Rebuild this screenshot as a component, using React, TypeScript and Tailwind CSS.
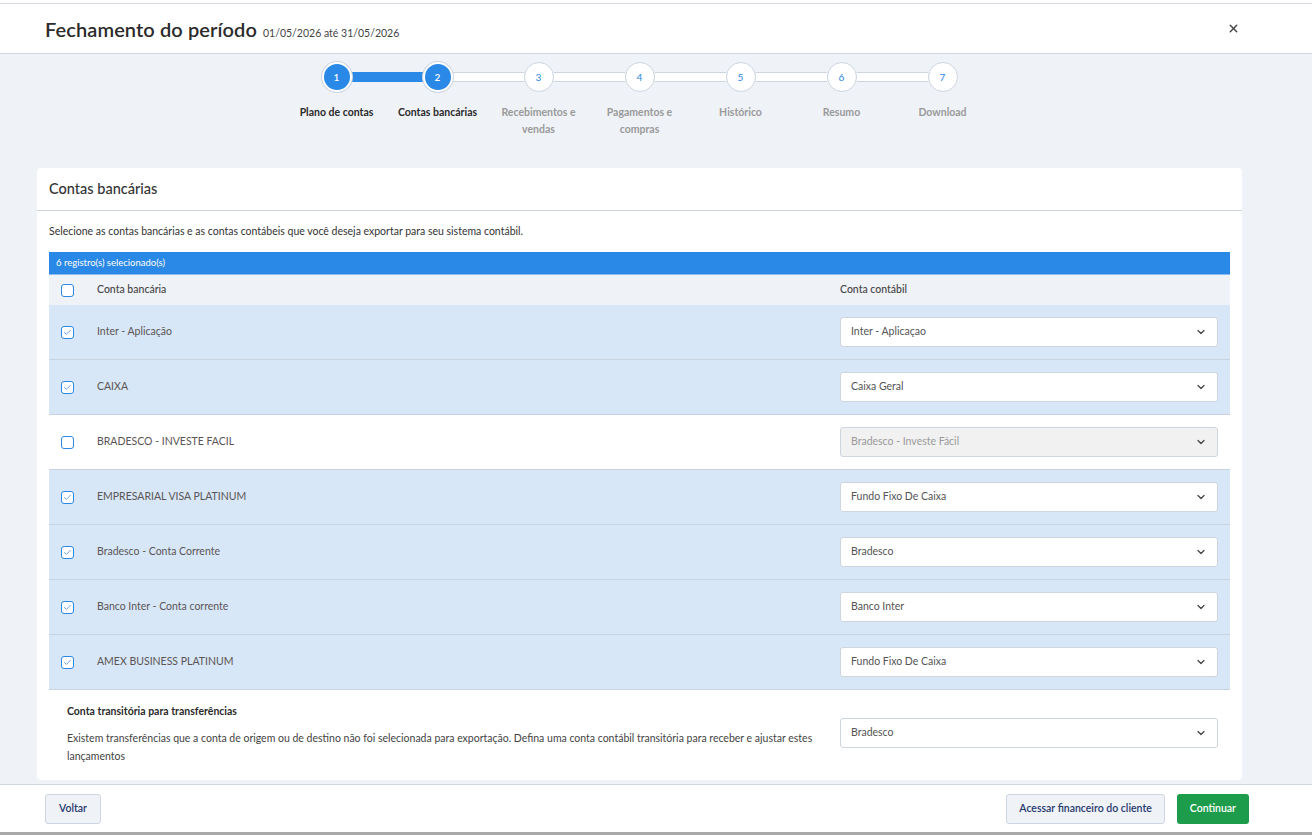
import { ChevronDown, X, Check } from 'lucide-react';

type Row = { name: string; account: string; checked: boolean };

const rows: Row[] = [
  { name: 'Inter - Aplicação', account: 'Inter - Aplicaçao', checked: true },
  { name: 'CAIXA', account: 'Caixa Geral', checked: true },
  { name: 'BRADESCO - INVESTE FACIL', account: 'Bradesco - Investe Fácil', checked: false },
  { name: 'EMPRESARIAL VISA PLATINUM', account: 'Fundo Fixo De Caixa', checked: true },
  { name: 'Bradesco - Conta Corrente', account: 'Bradesco', checked: true },
  { name: 'Banco Inter - Conta corrente', account: 'Banco Inter', checked: true },
  { name: 'AMEX BUSINESS PLATINUM', account: 'Fundo Fixo De Caixa', checked: true },
];

const steps = [
  'Plano de contas',
  'Contas bancárias',
  'Recebimentos e vendas',
  'Pagamentos e compras',
  'Histórico',
  'Resumo',
  'Download',
];

const current = 2;

function Checkbox({ checked }: { checked: boolean }) {
  return (
    <div className="w-[13px] h-[13px] rounded-[3px] border-[1.5px] border-[#2a88e6] bg-white flex items-center justify-center">
      {checked && <Check className="w-[9px] h-[9px] text-[#5d9fe9]" strokeWidth={2.5} />}
    </div>
  );
}

function Select({ value, disabled }: { value: string; disabled?: boolean }) {
  return (
    <div
      className={
        disabled
          ? 'h-[30px] w-full rounded-[3px] border border-[#cfd5dd] bg-[#f1f1f1] flex items-center justify-between pl-[10px] pr-[10px] text-[#9a9a9a]'
          : 'h-[30px] w-full rounded-[3px] border border-[#cfd5dd] bg-white flex items-center justify-between pl-[10px] pr-[10px] text-[#555]'
      }
    >
      <span className="text-[10.5px]">{value}</span>
      <ChevronDown className="w-[12px] h-[12px] text-[#444]" strokeWidth={2.5} />
    </div>
  );
}

function Stepper() {
  return (
    <div className="flex flex-col items-center pt-[8px]">
      <div className="flex items-center">
        {steps.map((_, i) => {
          const n = i + 1;
          const done = n <= current;
          return (
            <div key={n} className="flex items-center">
              {i > 0 && (
                <div
                  className={
                    n <= current
                      ? 'w-[71px] h-[10px] bg-[#2a88e6] border-y border-[#2a88e6]'
                      : 'w-[71px] h-[10px] bg-white border-y border-[#cdd5e0]'
                  }
                />
              )}
              <div
                className={
                  done
                    ? 'relative z-10 w-[30px] h-[30px] rounded-full bg-[#2a88e6] border-[2px] border-white ring-1 ring-[#cdd5e0] flex items-center justify-center text-[10px] text-white font-semibold'
                    : 'relative z-10 w-[30px] h-[30px] rounded-full bg-white border border-[#cdd5e0] flex items-center justify-center text-[10px] text-[#2a88e6]'
                }
              >
                {n}
              </div>
            </div>
          );
        })}
      </div>
      <div className="flex mt-[12px]">
        {steps.map((s, i) => (
          <div
            key={s}
            className={
              i + 1 <= current
                ? 'w-[101px] px-[5px] text-center text-[10.5px] leading-[17px] font-bold text-[#2b2b2b]'
                : 'w-[101px] px-[5px] text-center text-[10.5px] leading-[17px] font-bold text-[#9a9a9a]'
            }
          >
            {s}
          </div>
        ))}
      </div>
    </div>
  );
}

export default function App() {
  return (
    <div
      className="w-[1312px] h-[835px] flex flex-col bg-white overflow-hidden"
      style={{ fontFamily: 'Lato, "Noto Sans", sans-serif' }}
    >
      <div className="h-[4px] shrink-0 bg-white border-b border-[#d9dde3]" />
      <div className="h-[50px] shrink-0 flex items-center justify-between pl-[45px] pr-[72px] border-b border-[#cdd5e0]">
        <div className="flex items-baseline gap-[6px]">
          <span className="text-[20px] font-semibold text-[#2b2b2b] tracking-[0.1px]">Fechamento do período</span>
          <span className="text-[10.5px] text-[#444]">01/05/2026 até 31/05/2026</span>
        </div>
        <X className="w-[13px] h-[13px] text-[#444]" strokeWidth={2.5} />
      </div>

      <div className="flex-1 bg-[#eff2f7] pl-[37px] pr-[70px] overflow-hidden">
        <Stepper />
        <div className="mt-[30px] bg-white rounded-[4px]">
          <div className="h-[43px] flex items-center px-[12px] border-b border-[#cdd5e0]">
            <span className="text-[14.5px] font-medium text-[#333]">Contas bancárias</span>
          </div>
          <div className="px-[12px] pb-[4px]">
            <p className="pt-[13px] pb-[14px] text-[10.5px] text-[#333] leading-[14px]">
              Selecione as contas bancárias e as contas contábeis que você deseja exportar para seu sistema contábil.
            </p>
            <div className="h-[23px] bg-[#2a88e6] border-b border-[#8fbcf0] flex items-center px-[7px] text-[9.5px] text-white">
              6 registro(s) selecionado(s)
            </div>
            <div className="h-[30px] bg-[#eff2f7] flex items-center text-[10.5px] text-[#444] font-medium">
              <div className="pl-[12px] w-[48px]">
                <Checkbox checked={false} />
              </div>
              <div className="flex-1">Conta bancária</div>
              <div className="w-[390px]">Conta contábil</div>
            </div>
            {rows.map((r) => (
              <div
                key={r.name}
                className={
                  r.checked
                    ? 'h-[55px] bg-[#d8e7f8] border-b border-[#c8d3df] flex items-center text-[10.5px] text-[#5a5555]'
                    : 'h-[55px] bg-white border-b border-[#c8d3df] flex items-center text-[10.5px] text-[#5a5555]'
                }
              >
                <div className="pl-[12px] w-[48px]">
                  <Checkbox checked={r.checked} />
                </div>
                <div className="flex-1">{r.name}</div>
                <div className="w-[390px] pr-[12px]">
                  <Select value={r.account} disabled={!r.checked} />
                </div>
              </div>
            ))}
            <div className="flex items-start pt-[14px] pb-[11px]">
              <div className="flex-1 pl-[18px] pr-[20px]">
                <div className="text-[10.5px] font-bold text-[#2b2b2b]">Conta transitória para transferências</div>
                <p className="mt-[9px] text-[10.5px] leading-[18px] text-[#444]">
                  Existem transferências que a conta de origem ou de destino não foi selecionada para exportação. Defina uma conta contábil transitória para receber e ajustar estes lançamentos
                </p>
              </div>
              <div className="w-[390px] pr-[12px] pt-[14px]">
                <Select value="Bradesco" />
              </div>
            </div>
          </div>
        </div>
      </div>

      <div className="h-[48px] shrink-0 border-t border-[#cdd5e0] flex items-center justify-between pl-[45px] pr-[63px]">
        <button className="h-[30px] px-[13px] rounded-[3px] bg-[#eff2f7] border border-[#cdd5e0] text-[10.5px] font-semibold text-[#26386e]">
          Voltar
        </button>
        <div className="flex gap-[12px]">
          <button className="h-[30px] px-[12px] rounded-[3px] bg-[#eff2f7] border border-[#cdd5e0] text-[10.5px] font-semibold text-[#26386e]">
            Acessar financeiro do cliente
          </button>
          <button className="h-[30px] px-[13px] rounded-[3px] bg-[#1d9d4b] text-[10.5px] font-semibold text-white">
            Continuar
          </button>
        </div>
      </div>
      <div className="h-[3px] shrink-0 bg-[#a9a9a9]" />
    </div>
  );
}
